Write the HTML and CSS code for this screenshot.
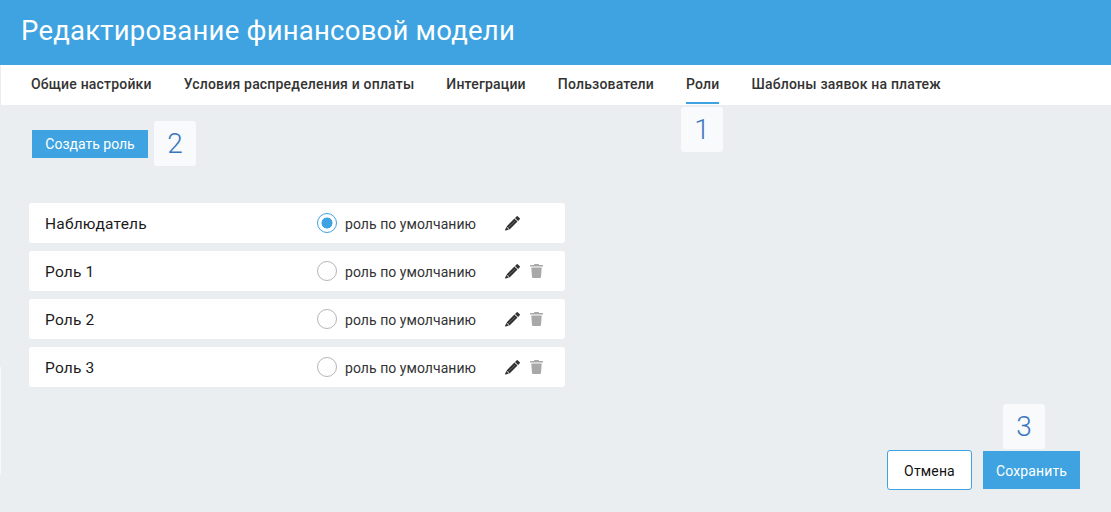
FILE: index.html
```html
<!DOCTYPE html>
<html lang="ru">
<head>
<meta charset="utf-8">
<title>Редактирование финансовой модели</title>
<link rel="stylesheet" href="styles.css">
</head>
<body>
<svg class="defs" aria-hidden="true">
  <symbol id="pencil" viewBox="0 0 15 15"><path fill="#333" d="M11.5.4a1 1 0 0 1 1.4 0l1.7 1.7a1 1 0 0 1 0 1.4l-1.5 1.5-3.1-3.1zM9.4 2.5l3.1 3.1-7.9 7.9-3.1-3.1zM1.3 11.1l2.6 2.6-3.5.9a.4.4 0 0 1-.5-.5z"/><path stroke="#fff" stroke-opacity=".4" stroke-width=".5" d="M3 12l7-7"/></symbol>
  <symbol id="trash" viewBox="0 0 13 14"><path fill="#a8a8a8" d="M4.4 0h4.2l.5 1H13v1.5H0V1h3.9zM1.3 3.6h10.4l-.7 9.4a1.1 1.1 0 0 1-1.1 1H3.1A1.1 1.1 0 0 1 2 13z"/></symbol>
</svg>
<div class="page">
  <header class="header"><h1 class="title">Редактирование финансовой модели</h1></header>
  <nav class="tabs">
    <a class="tab">Общие настройки</a>
    <a class="tab">Условия распределения и оплаты</a>
    <a class="tab">Интеграции</a>
    <a class="tab">Пользователи</a>
    <a class="tab tab-active">Роли</a>
    <a class="tab">Шаблоны заявок на платеж</a>
  </nav>
  <main class="content">
    <button class="btn btn-create">Создать роль</button>
    <ul class="roles">
      <li class="role">
        <span class="role-name">Наблюдатель</span>
        <span class="radio radio-on"></span>
        <span class="role-label">роль по умолчанию</span>
        <span class="actions">
          <svg class="icon"><use href="#pencil"/></svg>
        </span>
      </li>
      <li class="role">
        <span class="role-name">Роль 1</span>
        <span class="radio"></span>
        <span class="role-label">роль по умолчанию</span>
        <span class="actions">
          <svg class="icon"><use href="#pencil"/></svg>
          <svg class="icon-trash"><use href="#trash"/></svg>
        </span>
      </li>
      <li class="role">
        <span class="role-name">Роль 2</span>
        <span class="radio"></span>
        <span class="role-label">роль по умолчанию</span>
        <span class="actions">
          <svg class="icon"><use href="#pencil"/></svg>
          <svg class="icon-trash"><use href="#trash"/></svg>
        </span>
      </li>
      <li class="role">
        <span class="role-name">Роль 3</span>
        <span class="radio"></span>
        <span class="role-label">роль по умолчанию</span>
        <span class="actions">
          <svg class="icon"><use href="#pencil"/></svg>
          <svg class="icon-trash"><use href="#trash"/></svg>
        </span>
      </li>
    </ul>
    <footer class="footer">
      <button class="btn btn-cancel">Отмена</button>
      <button class="btn btn-save">Сохранить</button>
    </footer>
  </main>
  <span class="marker marker-1">1</span>
  <span class="marker marker-2">2</span>
  <span class="marker marker-3">3</span>
  <span class="edge"></span>
</div>
</body>
</html>
```
FILE: styles.css
```css
* { box-sizing: border-box; }
html, body { margin: 0; height: 100%; }
body { background: #ebeef1; font-family: Roboto, "Noto Sans", sans-serif; color: #333; overflow: hidden; }
.defs { display: none; }
.page { position: relative; width: 1111px; height: 512px; display: flex; flex-direction: column; }
.header { height: 65px; background: #3ea3e0; padding: 0 21px; display: flex; align-items: center; flex: none; }
.title { margin: 0; font-size: 27.5px; font-weight: 400; color: #fff; letter-spacing: 0.22px; line-height: 32px; position: relative; top: -2px; }
.tabs { height: 40px; flex: none; margin-left: 1px; background: #fff; display: flex; gap: 32px; padding-left: 30px; }
.tab { height: 39px; font-size: 14px; font-weight: 500; line-height: 39px; color: #333; white-space: nowrap; letter-spacing: 0.19px; }
.tab-active { border-bottom: 2px solid #3ea3e0; }
.content { flex: 1; display: flex; flex-direction: column; align-items: flex-start; padding: 25px 31px 22px 29px; }
.btn { font-family: inherit; font-size: 14px; border: 0; padding: 0; cursor: pointer; }
.btn-create { width: 116px; height: 28px; margin-left: 3px; background: #3ea3e0; color: #fff; }
.roles { list-style: none; margin: 45px 0 0; padding: 0; width: 536px; display: flex; flex-direction: column; gap: 8px; }
.role { height: 40px; background: #fff; border-radius: 3px; display: flex; align-items: center; padding-left: 16px; }
.role-name { width: 272px; padding-top: 2px; font-size: 15.5px; color: #1a1a1a; letter-spacing: 0.2px; }
.radio { width: 20px; height: 20px; border-radius: 50%; border: 1px solid #b5b5b5; background: #fff; flex: none; }
.radio-on { border-color: #3ea3e0; background: radial-gradient(circle, #3ea3e0 0 5.2px, transparent 5.8px); }
.role-label { margin-left: 8px; width: 160px; padding-top: 2px; font-size: 14px; color: #333; white-space: nowrap; letter-spacing: 0.05px; }
.actions { display: flex; align-items: center; gap: 10px; }
.icon { width: 15px; height: 15px; display: block; }
.icon-trash { width: 13px; height: 14px; display: block; }
.footer { margin-top: auto; align-self: flex-end; display: flex; align-items: center; gap: 11px; }
.btn-cancel { width: 85px; height: 40px; padding-top: 2px; background: #fff; border: 1px solid #3ea3e0; border-radius: 3px; color: #111; letter-spacing: 0.15px; }
.btn-save { width: 97px; height: 38px; padding-top: 2px; background: #3ea3e0; color: #fff; letter-spacing: 0.15px; }
.marker { position: absolute; width: 42px; height: 45px; background: #f8fafc; border-radius: 3px; color: #3a76bd; font-size: 28px; font-weight: 300; display: flex; align-items: center; justify-content: center; }
.marker-1 { left: 681px; top: 107px; }
.marker-2 { left: 154px; top: 121px; }
.marker-3 { left: 1003px; top: 404px; }
.edge { position: absolute; left: 0; top: 367px; width: 1px; height: 108px; background: #f7f8fa; }
```
